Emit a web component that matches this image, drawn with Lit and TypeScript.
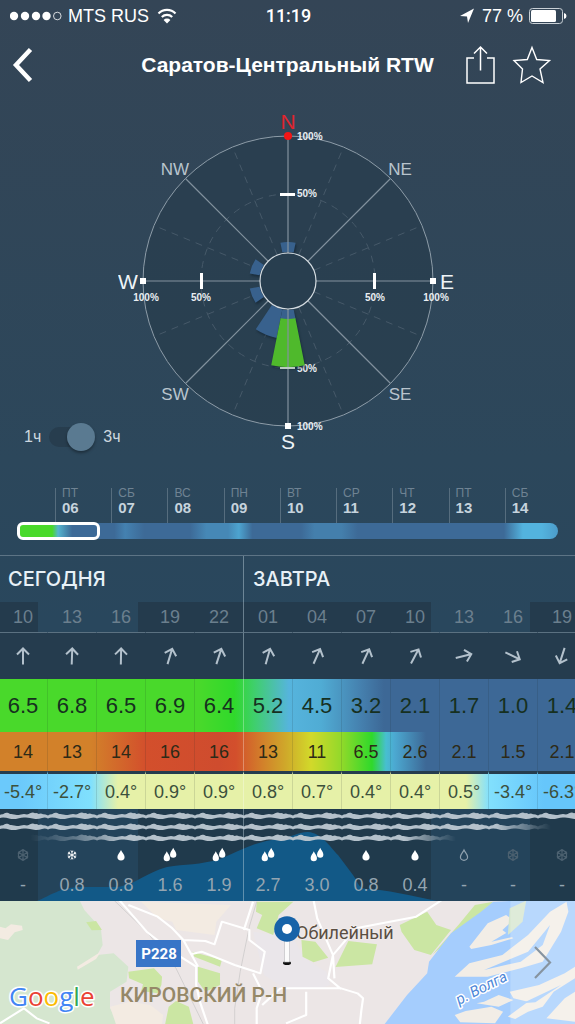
import { LitElement, html, svg, css } from "lit";
import { customElement, state } from "lit/decorators.js";
import { classMap } from "lit/directives/class-map.js";

type Precip = "flake-dim" | "flake" | "drop" | "drops" | "drop-outline";

interface Slot {
  hour: string;
  dir: number;
  wind: string;
  gust: string;
  temp: string;
  icon: Precip;
  amount: string;
}

const SLOTS: Slot[] = [
  { hour: "10", dir: 0, wind: "6.5", gust: "14", temp: "-5.4°", icon: "flake-dim", amount: "-" },
  { hour: "13", dir: 2, wind: "6.8", gust: "13", temp: "-2.7°", icon: "flake", amount: "0.8" },
  { hour: "16", dir: 1, wind: "6.5", gust: "14", temp: "0.4°", icon: "drop", amount: "0.8" },
  { hour: "19", dir: 17, wind: "6.9", gust: "16", temp: "0.9°", icon: "drops", amount: "1.6" },
  { hour: "22", dir: 18, wind: "6.4", gust: "16", temp: "0.9°", icon: "drops", amount: "1.9" },
  { hour: "01", dir: 16, wind: "5.2", gust: "13", temp: "0.8°", icon: "drops", amount: "2.7" },
  { hour: "04", dir: 24, wind: "4.5", gust: "11", temp: "0.7°", icon: "drops", amount: "3.0" },
  { hour: "07", dir: 25, wind: "3.2", gust: "6.5", temp: "0.4°", icon: "drop", amount: "0.8" },
  { hour: "10", dir: 28, wind: "2.1", gust: "2.6", temp: "0.4°", icon: "drop", amount: "0.4" },
  { hour: "13", dir: 76, wind: "1.7", gust: "2.1", temp: "0.5°", icon: "drop-outline", amount: "-" },
  { hour: "16", dir: 116, wind: "1.0", gust: "1.5", temp: "-3.4°", icon: "flake-dim", amount: "-" },
  { hour: "19", dir: 198, wind: "1.4", gust: "2.1", temp: "-6.3°", icon: "flake-dim", amount: "-" },
];

const DAYS: [string, string][] = [
  ["ПТ", "06"], ["СБ", "07"], ["ВС", "08"], ["ПН", "09"], ["ВТ", "10"],
  ["СР", "11"], ["ЧТ", "12"], ["ПТ", "13"], ["СБ", "14"],
];

const polar = (deg: number, r: number): [number, number] => {
  const a = (deg * Math.PI) / 180;
  return [Math.sin(a) * r, -Math.cos(a) * r];
};

/* Petal of the rose: bearing, inner radius, outer radius */
const petal = (deg: number, r0: number, r1: number): string => {
  const h = 11.25;
  const [ax, ay] = polar(deg - h, r0);
  const [bx, by] = polar(deg - h, r1);
  const [cx, cy] = polar(deg + h, r1);
  const [dx, dy] = polar(deg + h, r0);
  return `M${ax} ${ay}L${bx} ${by}A${r1} ${r1} 0 0 1 ${cx} ${cy}L${dx} ${dy}A${r0} ${r0} 0 0 0 ${ax} ${ay}Z`;
};

@customElement("wind-rose")
class WindRose extends LitElement {
  static styles = css`
    :host { display: block; }
    svg { display: block; width: 340px; height: 346px; font-family: "Liberation Sans", Arial, sans-serif; }
    .disc { fill: #283d4e; fill-opacity: 0.75; stroke: #8d9ca8; stroke-width: 1; }
    .hub { fill: #283e4f; stroke: #d5dce1; stroke-width: 1.2; }
    .spoke { stroke: #83929e; stroke-width: 1.2; }
    .dash { stroke: #465969; stroke-width: 1; stroke-dasharray: 7 6; fill: none; }
    .petal { fill: #38618d; }
    .petal-strong { fill: #4fb92c; }
    .shade { filter: drop-shadow(1px 2px 1px rgba(10, 25, 40, 0.5)); }
    .mark { fill: #fff; }
    .mark-faded { fill: #b9c9c0; }
    .north-mark { fill: #f31616; }
    .main { font-size: 21px; fill: #eef4f8; text-anchor: middle; }
    .north { fill: #e0252e; }
    .minor { font-size: 17px; fill: #b9c4cd; text-anchor: middle; }
    .pct { font-size: 10px; font-weight: 700; fill: #e9eef2; }
    .mid { text-anchor: middle; }
  `;

  render() {
    const minor = [22.5, 67.5, 112.5, 157.5, 202.5, 247.5, 292.5, 337.5];
    const major = [0, 45, 90, 135, 180, 225, 270, 315];
    const line = (deg: number, cls: string) => {
      const [x1, y1] = polar(deg, 28);
      const [x2, y2] = polar(deg, 145);
      return svg`<line class=${cls} x1=${x1} y1=${y1} x2=${x2} y2=${y2}></line>`;
    };
    return html`
      <svg viewBox="-170 -170 340 346" role="img" aria-label="Роза ветров">
        <circle class="disc" r="145"></circle>
        <circle class="dash" r="87"></circle>
        ${minor.map((d) => line(d, "dash"))}
        <g class="shade">
          <path class="petal" d=${petal(0, 29, 39)}></path>
          <path class="petal" d=${petal(292.5, 29, 39)}></path>
          <path class="petal" d=${petal(247.5, 29, 39)}></path>
          <path class="petal" d=${petal(202.5, 29, 58)}></path>
          <path class="petal" d=${petal(180, 29, 39)}></path>
        </g>
        <text class="pct" x="9" y="91">50%</text>
        <path class="petal-strong shade" d=${petal(180, 38, 86)}></path>
        ${major.map((d) => line(d, "spoke"))}
        <circle class="hub" r="28"></circle>
        <rect class="mark" x="-8" y="-88" width="15" height="3"></rect>
        <rect class="mark-faded" x="-8" y="86" width="15" height="2"></rect>
        <rect class="mark" x="-88" y="-8" width="3" height="16"></rect>
        <rect class="mark" x="85" y="-8" width="3" height="16"></rect>
        <circle class="north-mark" cy="-145" r="4"></circle>
        <rect class="mark" x="-3" y="142" width="6" height="6"></rect>
        <rect class="mark" x="-148" y="-3" width="6" height="6"></rect>
        <rect class="mark" x="142" y="-3" width="6" height="6"></rect>
        <text class="main north" x="0" y="-152">N</text>
        <text class="main" x="0" y="168">S</text>
        <text class="main" x="-160" y="8">W</text>
        <text class="main" x="159" y="8">E</text>
        <text class="minor" x="-113" y="-106">NW</text>
        <text class="minor" x="112" y="-106">NE</text>
        <text class="minor" x="-113" y="119">SW</text>
        <text class="minor" x="112" y="119">SE</text>
        <text class="pct" x="9" y="-141">100%</text>
        <text class="pct" x="9" y="-84">50%</text>
        <text class="pct" x="9" y="149">100%</text>
        <text class="pct mid" x="-142" y="20">100%</text>
        <text class="pct mid" x="-87" y="20">50%</text>
        <text class="pct mid" x="87" y="20">50%</text>
        <text class="pct mid" x="148" y="20">100%</text>
      </svg>
    `;
  }
}

@customElement("forecast-table")
class ForecastTable extends LitElement {
  static styles = css`
    :host { display: block; overflow: hidden; border-top: 1px solid #5d7485; font-family: "Liberation Sans", Arial, sans-serif; }
    .strip { position: relative; width: 588px; margin-left: -1px; }
    table { position: relative; width: 100%; table-layout: fixed; border-collapse: separate; border-spacing: 0; }
    th, td { padding: 0; text-align: center; font-weight: 400; font-size: 18px; line-height: 20px; border-right: 1px solid transparent; box-sizing: border-box; }
    svg { display: block; margin: 0 auto; }
    .day-end { border-right-color: rgba(190, 210, 222, 0.45); }
    .days th { height: 46px; padding-left: 9px; text-align: left; font: 500 20px/22px Inter, "Liberation Sans", sans-serif; color: #e8f1f7; }
    .hours { background: linear-gradient(90deg, #243b4d 39px, transparent 39px 139px, #243b4d 139px 432px, transparent 432px 531px, #243b4d 531px); }
    .hours th { height: 31px; color: #6b7f8e; border-bottom: 1px solid #5b7181; }
    .dirs { background: #253c4e; }
    .dirs td { height: 46px; }
    .wind td, .gust td, .temp td { border-right-color: rgba(20, 40, 40, 0.13); }
    .wind td.day-end, .gust td.day-end, .temp td.day-end { border-right-color: rgba(255, 255, 255, 0.3); }
    .wind { background: linear-gradient(90deg, #49d92b 200px, #30d92b 235px, #3fcf6b 255px, #56b4dd 290px, #50acd4 322px, #4580ae 362px, #3d6896 385px); }
    .wind td { height: 53px; font-size: 22px; color: #16301f; }
    .gust { background: linear-gradient(90deg, #d2812a 92px, #d34f2c 147px, #cf4c2e 220px, #d34f2c 237px, #d2812a 264px, #cfa92a 287px, #d2d92a 312px, #93d92a 342px, #2fd92b 373px, #47bfd0 387px, #4caad2 395px, #3d6896 427px); }
    .gust td { height: 39px; color: #2d2a17; }
    .temp { background: linear-gradient(90deg, #6bc9fb 20px, #80e0fd 92px, #e6f1a8 119px, #e6f1a8 467px, #82e0fd 490px, #66c6fb 545px); }
    .temp td { height: 38px; color: #3c503c; border-top: 3px solid #253c4e; }
    .clouds td { height: 32px; }
    .icons td { height: 28px; }
    .amounts td { height: 32px; color: #94a5b1; }
    .backdrop { position: absolute; left: 0; bottom: 0; }
    .arrow { fill: none; stroke: #b3c1cc; stroke-width: 2; }
    .drop { fill: #fff; }
    .drop-outline { fill: none; stroke: #8fa1ae; stroke-width: 1.2; }
    .flake { fill: none; stroke: #fff; stroke-width: 0.9; }
    .flake-dim { fill: none; stroke: #4c6170; stroke-width: 1.2; }
    .night { fill: #203a4c; }
    .light { fill: #24445b; }
    .area { fill: #125987; }
    .cloud { fill: #b4c1cb; }
  `;

  private flake(cls: string, ring: boolean) {
    const r = ring ? 5.5 : 4.6;
    return svg`<g class=${cls}>
      ${[0, 60, 120].map((a) => svg`<g transform="rotate(${a})">
        <path d="M0 ${-r}V${r}M-1.4 ${-r + 0.4}L0 ${-r + 1.8}L1.4 ${-r + 0.4}M-1.4 ${r - 0.4}L0 ${r - 1.8}L1.4 ${r - 0.4}"></path>
      </g>`)}
      ${ring ? svg`<path d="M0 -5.2L4.5 -2.6V2.6L0 5.2L-4.5 2.6V-2.6Z"></path>` : ""}
    </g>`;
  }

  private icon(kind: Precip) {
    const drop = "M0 -5C1 -2.6 3.6 -0.6 3.6 2A3.6 3.4 0 0 1 -3.6 2C-3.6 -0.6 -1 -2.6 0 -5Z";
    const body =
      kind === "flake" ? this.flake("flake", false)
      : kind === "flake-dim" ? this.flake("flake-dim", true)
      : kind === "drop" ? svg`<path class="drop" d=${drop}></path>`
      : kind === "drop-outline" ? svg`<path class="drop-outline" d=${drop}></path>`
      : svg`<g class="drop"><path d=${drop} transform="translate(-3.2 1) scale(.88 .95)"></path><path d=${drop} transform="translate(3.2 -2.4) scale(.88 .95)"></path></g>`;
    return html`<svg width="20" height="16" viewBox="-10 -8 20 16" aria-hidden="true">${body}</svg>`;
  }

  private cells(draw: (s: Slot) => unknown) {
    return SLOTS.map((s, i) => html`<td class=${classMap({ "day-end": i === 4 })}>${draw(s)}</td>`);
  }

  render() {
    return html`
      <div class="strip">
        <svg class="backdrop" width="588" height="92" viewBox="-1 0 588 92" aria-hidden="true">
          <defs>
            <pattern id="cl" x="-1" width="49" height="10" patternUnits="userSpaceOnUse">
              <path class="cloud" d="M0 3.400Q2 2 4 2.200Q6 0.200 8.500 0.800Q10 1 11 2Q13 1.600 15 2.600Q18 3.400 22 2.400Q25 1.600 28 2.400Q30 2 31 1.200Q34 -0.200 36 1.200Q38 0.800 39.500 2Q42 0.800 44 2.200Q46 2 49 3.400V6.400Q46 5 43 6Q39 7.400 35 6.800Q31 6 27 5.600Q23 5.200 20 6.200Q15 7.600 11 6.800Q7 5.600 4 5.600Q2 5.600 0 6.400Z"></path>
            </pattern>
            <linearGradient id="fade2" gradientUnits="userSpaceOnUse" x1="0" x2="551" y1="0" y2="0">
              <stop offset=".9" stop-color="#fff"></stop><stop offset="1" stop-color="#fff" stop-opacity="0"></stop>
            </linearGradient>
            <linearGradient id="fade3" gradientUnits="userSpaceOnUse" x1="30" x2="456" y1="0" y2="0">
              <stop offset="0" stop-color="#fff" stop-opacity="0"></stop><stop offset=".1" stop-color="#fff" stop-opacity=".4"></stop>
              <stop offset=".22" stop-color="#fff"></stop><stop offset=".88" stop-color="#fff"></stop><stop offset="1" stop-color="#fff" stop-opacity="0"></stop>
            </linearGradient>
            <mask id="m2" maskUnits="userSpaceOnUse" x="-2" y="0" width="590" height="12"><rect x="-2" width="590" height="12" fill="url(#fade2)"></rect></mask>
            <mask id="m3" maskUnits="userSpaceOnUse" x="-2" y="0" width="590" height="12"><rect x="-2" width="590" height="12" fill="url(#fade3)"></rect></mask>
          </defs>
          <rect class="night" x="-2" width="590" height="92"></rect>
          <rect class="light" x="38" width="100" height="92"></rect>
          <rect class="light" x="431" width="99" height="92"></rect>
          <path class="area" d="M37 92C50 87 60 78 82 78L117 78C135 76 145 64 167 58C185 55 200 56 220 50C240 42 255 32 280 30C290 29 297 23 308 23C322 24 330 38 338 46L353 66C358 73 358 79 366 80C385 80 412 87 437 92Z"></path>
          <g transform="translate(0 3)"><rect x="-2" width="590" height="9" fill="url(#cl)"></rect></g>
          <g transform="translate(0 14)"><rect x="-2" width="590" height="9" fill="url(#cl)" mask="url(#m2)"></rect></g>
          <g transform="translate(0 25)"><rect x="-2" width="590" height="9" fill="url(#cl)" mask="url(#m3)"></rect></g>
        </svg>
        <table>
          <thead>
            <tr class="days">
              <th class="day-end" colspan="5" scope="colgroup">СЕГОДНЯ</th>
              <th colspan="7" scope="colgroup">ЗАВТРА</th>
            </tr>
            <tr class="hours">
              ${SLOTS.map((s, i) => html`<th scope="col" class=${classMap({ "day-end": i === 4 })}>${s.hour}</th>`)}
            </tr>
          </thead>
          <tbody>
            <tr class="dirs">
              ${this.cells((s) => html`<svg width="20" height="20" viewBox="-10 -10 20 20" aria-hidden="true">
                <path class="arrow" transform="rotate(${s.dir})" d="M0 8.5V-7M-6 -1.5L0 -7.5L6 -1.5"></path></svg>`)}
            </tr>
            <tr class="wind">${this.cells((s) => s.wind)}</tr>
            <tr class="gust">${this.cells((s) => s.gust)}</tr>
            <tr class="temp">${this.cells((s) => s.temp)}</tr>
            <tr class="clouds">${this.cells(() => "")}</tr>
            <tr class="icons">${this.cells((s) => this.icon(s.icon))}</tr>
            <tr class="amounts">${this.cells((s) => s.amount)}</tr>
          </tbody>
        </table>
      </div>
    `;
  }
}

@customElement("spot-map")
class SpotMap extends LitElement {
  static styles = css`
    :host { display: flex; min-height: 123px; background: #ece6e6; }
    svg { display: block; width: 100%; height: auto; flex: 1; min-width: 0; }
    .land { fill: #ece6e6; }
    .forest { fill: #d5e6cf; }
    .park { fill: #cbe6a3; }
    .sand { fill: #f3ebe2; }
    .town { fill: #eae6ea; }
    .water { fill: #a5cdfd; }
    .isle { fill: #f2ede6; }
    .veil { fill: #fff; fill-opacity: 0.22; }
    .road { fill: none; stroke: #fff; stroke-width: 6; stroke-linejoin: round; }
    .rail { fill: none; stroke: #cfcdcd; stroke-width: 2.5; }
    .sign { fill: #3875c7; }
    .sign-text { font: 700 15px Roboto, sans-serif; fill: #fff; text-anchor: middle; }
    .place { font: 400 18px Roboto, sans-serif; fill: #5a4e42; }
    .area { font: 500 21px Roboto, sans-serif; fill: #958868; }
    .halo { stroke: #fff; stroke-width: 3; stroke-linejoin: round; paint-order: stroke; }
    .soft { stroke: #f0ebea; stroke-width: 2; }
    .river { font: italic 400 15px Roboto, sans-serif; fill: #4c86d8; }
    .logo { font: 500 26px "Open Sans", sans-serif; }
    .g-blue { fill: #4285f4; }
    .g-red { fill: #ea4335; }
    .g-yellow { fill: #fbbc05; }
    .g-green { fill: #34a853; }
    .pin { fill: #1763a8; }
    .pin-hole { fill: #fff; }
    .stem { fill: #fbfbfb; stroke: #b9b9bd; stroke-width: 0.6; }
    .foot { fill: #111; }
    .next { fill: none; stroke: #8794a0; stroke-width: 2.2; }
  `;

  render() {
    return html`
      <svg viewBox="0 0 575 123" preserveAspectRatio="xMidYMid slice" role="img" aria-label="Карта">
        <g transform="scale(.3667 .3333) translate(0 -18)">
          <rect class="land" y="0" width="1568" height="400"></rect>
          <path class="forest" d="M0 0H210L230 45L275 100L280 150L265 180L310 175L350 215L345 260L300 290L300 340L330 400H0Z"></path>
          <path class="sand" d="M0 95L15 100L30 88L60 92L62 105L40 112L22 135L0 130ZM210 215L275 170L262 192L212 224ZM300 335L355 320L410 330L445 360L440 400H320ZM385 20L500 25L630 30L590 80L585 120L480 105L470 80L430 70Z"></path>
          <path class="town" d="M690 110L800 130L830 190L890 230L900 270L870 282H780L720 240Z"></path>
          <path class="park" d="M350 230L420 220L442 245L440 270L430 295L385 288L390 268L352 250ZM460 335L480 318L515 335L530 400H448ZM540 215L600 235L600 270L560 290L540 260ZM525 170L605 195L600 215L530 185ZM700 20H800L760 60L745 120L700 100L715 60L698 50ZM822 135L860 140L895 188L855 202L825 185ZM950 138L1028 148L1015 208L915 216ZM1090 90L1165 50L1190 90L1230 105L1175 180L1130 165L1095 110ZM235 82L262 78L278 105L250 106ZM1180 178L1250 90L1295 30L1345 20L1255 110Z"></path>
          <path class="water" d="M1310 52L1345 20L1568 10V400H1040L1110 300L1165 235L1170 200L1230 115Z"></path>
          <path class="isle" d="M1280 155L1330 85L1380 60L1400 75L1370 105L1400 130L1340 150L1285 162ZM1240 245L1280 205L1370 180L1440 120L1500 50L1545 20L1550 50L1530 110L1480 200L1420 220L1330 245ZM1255 382L1240 360L1270 348L1340 335L1372 350L1350 385ZM1390 290L1470 270L1540 235L1568 215V250L1510 290L1480 335L1440 350L1405 372L1385 365L1440 320L1400 310ZM1490 370L1540 310L1568 290V380ZM1300 325L1320 320L1360 300L1400 315L1360 335Z"></path>
          <path class="water" d="M1340 140L1440 75L1400 125ZM1320 225L1440 170L1500 90L1480 150L1420 200ZM1425 325L1530 270L1460 322Z"></path>
          <path class="forest" d="M1390 40L1435 17L1425 80L1385 120Z"></path>
          <rect class="veil" x="1392" y="0" width="176" height="400"></rect>
          <path class="rail" d="M312 17L400 110L480 220L560 400M700 20L680 95L655 230L640 340V400"></path>
          <path class="road" d="M325 15L400 110L470 170L535 215V270L545 320L570 400"></path>
          <path class="road" d="M350 30L430 65L470 100L500 135L560 138L585 148L605 80L680 105V135L722 170L710 235L640 210L550 170L520 178M665 105L690 20M500 135L540 215M690 235L715 290L700 340L700 400M765 280H930L975 295L990 310L985 350L980 400M765 280L715 330M835 290V360L780 385M855 15L865 70L908 180L895 250L930 282M1205 15L1135 65L970 100L908 180L912 250"></path>
          <path class="road" d="M0 385L65 340L100 370L135 385"></path>
        </g>
        <rect class="sign" x="136" y="39" width="45" height="27"></rect>
        <text class="sign-text" x="159" y="58">Р228</text>
        <text class="place soft halo" x="296" y="38">Обилейный</text>
        <text class="area" x="120" y="101">КИРОВСКИЙ Р-Н</text>
        <text class="river halo" transform="translate(459 104) rotate(-27)">р. Волга</text>
        <text class="logo halo" x="9" y="105"><tspan class="g-blue">G</tspan><tspan class="g-red">o</tspan><tspan class="g-yellow">o</tspan><tspan class="g-blue">g</tspan><tspan class="g-green">l</tspan><tspan class="g-red">e</tspan></text>
        <ellipse class="foot" cx="287" cy="62" rx="4" ry="2"></ellipse>
        <rect class="stem" x="284.500" y="38" width="5" height="23"></rect>
        <circle class="pin" cx="287" cy="28" r="12.800"></circle>
        <circle class="pin-hole" cx="287" cy="28" r="5"></circle>
        <path class="next" d="M535 46L550 61.500L535 77"></path>
      </svg>
    `;
  }
}

@customElement("app-root")
class AppRoot extends LitElement {
  @state() private threeHours = true;

  static styles = css`
    :host { display: flex; flex-direction: column; min-height: 100vh; background: linear-gradient(180deg, #344556 0, #2c475b 460px, #29475d 620px); color: #fff; font-family: "Liberation Sans", Arial, sans-serif; overflow: hidden; }
    svg { display: block; }
    .status { display: grid; grid-template-columns: 1fr auto 1fr; align-items: center; height: 32px; padding: 0 8px 0 10px; font: 400 18px/22px "Liberation Sans", Arial, sans-serif; }
    .side { display: flex; align-items: center; gap: 6px; }
    .end { justify-content: flex-end; }
    .time { font: 500 18px/22px Roboto, sans-serif; }
    .nav { display: grid; grid-template-columns: 1fr auto 1fr; align-items: center; height: 66px; padding: 0 23px 0 12px; }
    .title { margin: 0 0 0 11px; font-size: 21px; line-height: 24px; font-weight: 700; }
    .actions { display: flex; justify-content: flex-end; gap: 16px; }
    button { padding: 0; border: 0; background: none; color: inherit; cursor: pointer; }
    .back { justify-self: start; }
    .stage { display: grid; margin-top: 13px; justify-items: center; }
    .stage > * { grid-area: 1 / 1; }
    .step { justify-self: start; align-self: end; display: flex; align-items: center; gap: 8px; height: 40px; padding-left: 24px; font-size: 16px; line-height: 20px; color: #ccd7df; }
    .switch { appearance: none; display: flex; align-items: center; width: 46px; height: 20px; margin: 0; border-radius: 10px; background: #273d4e; cursor: pointer; }
    .switch::before { content: ""; width: 28px; height: 28px; flex: none; border-radius: 50%; background: #5a7a91; box-shadow: 0 2px 3px rgba(0, 0, 0, 0.35); }
    .switch:checked { justify-content: flex-end; }
    .days { display: grid; grid-template-columns: repeat(9, 1fr); margin: 31px 14px 0 55px; padding: 0; list-style: none; }
    .day { height: 35px; box-sizing: border-box; padding-left: 6px; border-left: 1px solid #566d7e; }
    .dow { display: block; font-size: 12px; line-height: 11px; color: #6f8393; }
    .num { display: block; font-size: 15px; line-height: 17px; font-weight: 700; color: #c6d3dd; }
    .bar { position: relative; height: 16px; margin: 0 17px 16px; border-radius: 8px; background: linear-gradient(90deg, #49d92b 0 6.5%, #55b4cf 7.6%, #3d6a97 10.2%, #3d6a97 18%, #4481b0 20%, #3d6a97 23.5%, #3d6a97 32%, #4688b6 35%, #4688b6 39%, #4da4d0 41%, #3d6a97 43.5%, #3d6a97 52.5%, #447fac 55%, #447fac 60%, #3d6a97 63%, #3d6a97 90%, #53b3de 93.5%, #53b3de 97%, #4c9cca 100%); }
    .window { position: absolute; inset: -1px auto -1px 0; width: 15.3%; box-sizing: border-box; border: 3px solid #fff; border-radius: 6px; }
    spot-map { flex: 1; }
  `;

  render() {
    return html`
      <header class="status">
        <div class="side">
          <svg width="52" height="12" viewBox="0 0 52 12" fill="#fff" aria-hidden="true">
            <circle cx="4" cy="6" r="4.2"></circle><circle cx="15" cy="6" r="4.2"></circle><circle cx="26" cy="6" r="4.2"></circle><circle cx="36.500" cy="6" r="4.2"></circle>
            <circle cx="47.300" cy="6" r="3.800" fill="none" stroke="#fff" stroke-width=".8"></circle>
          </svg>
          <span>MTS RUS</span>
          <svg width="24" height="16" viewBox="0 0 24 16" fill="none" stroke="#fff" stroke-width="2.200" aria-hidden="true">
            <path d="M3.500 5.500A12 12 0 0 1 20.500 5.500"></path><path d="M6.800 9A7.400 7.400 0 0 1 17.200 9"></path>
            <path d="M12 15.500L8.600 12A4.800 4.800 0 0 1 15.400 12Z" fill="#fff" stroke="none"></path>
          </svg>
        </div>
        <span class="time">11:19</span>
        <div class="side end">
          <svg width="18" height="16" viewBox="0 0 18 16" fill="#fff" aria-hidden="true"><path d="M16 .5L10 15L9 8.500L2 8Z"></path></svg>
          <span>77 %</span>
          <svg width="38" height="16" viewBox="0 0 38 16" aria-hidden="true">
            <rect x=".5" y=".5" width="33" height="15" rx="3" fill="none" stroke="#c9d0d6"></rect>
            <rect x="2" y="2" width="25" height="12" rx="1.500" fill="#fff"></rect>
            <path d="M35 5V11Q37.500 10.500 37.500 8Q37.500 5.500 35 5Z" fill="#fff"></path>
          </svg>
        </div>
      </header>
      <nav class="nav">
        <button class="back" aria-label="Назад">
          <svg width="24" height="36" viewBox="0 0 24 36" fill="none" stroke="#fff" stroke-width="4.500"><path d="M18.500 2.500L4 18L18.500 33.500"></path></svg>
        </button>
        <h1 class="title">Саратов-Центральный RTW</h1>
        <div class="actions">
          <button aria-label="Поделиться">
            <svg width="32" height="40" viewBox="0 0 32 40" fill="none" stroke="#fff" stroke-width="1.500">
              <path d="M10 13H3V38H30V13H23M16.500 25.500V2M10 8.500L16.500 2L23 8.500"></path>
            </svg>
          </button>
          <button aria-label="В избранное">
            <svg width="40" height="40" viewBox="0 0 40 40" fill="none" stroke="#fff" stroke-width="1.400">
              <path d="M20 2.500L24.700 14.500L37.500 15.500L28 24L31 37.500L20 31L9 37.500L10.500 24L2 15.500L15.300 14.500Z"></path>
            </svg>
          </button>
        </div>
      </nav>
      <section class="stage">
        <wind-rose></wind-rose>
        <label class="step">
          <span>1ч</span>
          <input class="switch" type="checkbox" role="switch" .checked=${this.threeHours}
            @change=${(e: Event) => (this.threeHours = (e.target as HTMLInputElement).checked)} />
          <span>3ч</span>
        </label>
      </section>
      <ol class="days">
        ${DAYS.map(([dow, num]) => html`<li class="day"><span class="dow">${dow}</span><span class="num">${num}</span></li>`)}
      </ol>
      <div class="bar"><div class="window"></div></div>
      <forecast-table></forecast-table>
      <spot-map></spot-map>
    `;
  }
}
